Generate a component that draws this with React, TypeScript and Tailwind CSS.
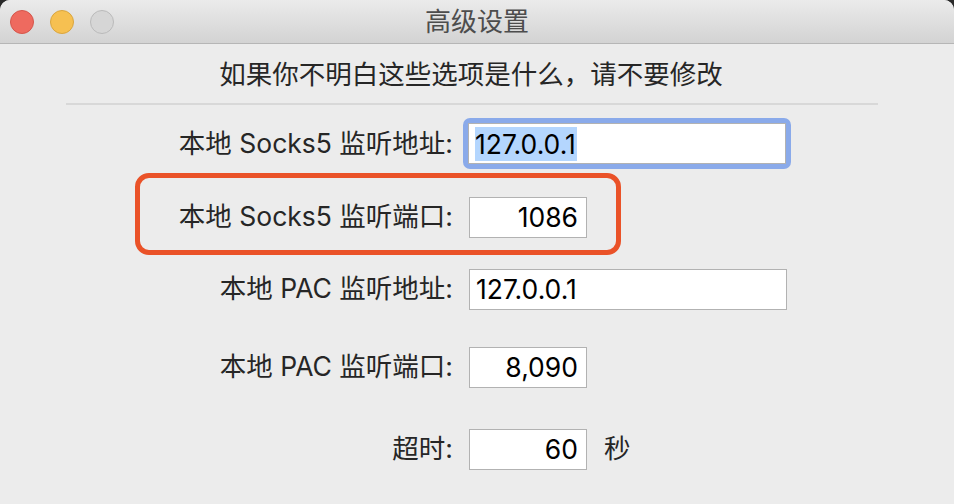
const FONT = "font-['Inter','Noto_Sans_CJK_SC',sans-serif]";

function TrafficLights() {
  return (
    <div className="absolute left-[10px] top-[10px] flex gap-4">
      <span className="h-6 w-6 rounded-full border border-[#d4564b] bg-[#ee6a5f]" />
      <span className="h-6 w-6 rounded-full border border-[#d9a53f] bg-[#f6c051]" />
      <span className="h-6 w-6 rounded-full border border-[#bababa] bg-[#d6d6d6]" />
    </div>
  );
}

function Field({
  value,
  wide,
  focused,
}: {
  value: string;
  wide?: boolean;
  focused?: boolean;
}) {
  const box = (
    <div
      className={`flex h-[41px] items-center border border-[#b2b2b2] bg-white text-[26.5px] text-black ${
        wide ? "w-[318px] justify-start pl-[6px]" : "w-[118px] justify-end pr-[8px]"
      } ${focused ? "border-[#9ab4ec]" : ""}`}
    >
      {focused ? (
        <span className="inline-block bg-[#b4d6fe] pr-[1px] leading-[34px]">{value}</span>
      ) : (
        <span className="leading-[34px]">{value}</span>
      )}
    </div>
  );
  if (!focused) return box;
  return <div className="-m-[6px] rounded-[7px] bg-[#8aaaea] p-[5px]">{box}</div>;
}

function Row({
  label,
  value,
  wide,
  focused,
  suffix,
  className,
}: {
  label: string;
  value: string;
  wide?: boolean;
  focused?: boolean;
  suffix?: string;
  className?: string;
}) {
  return (
    <div className={`flex items-center ${className ?? ""}`}>
      <div className="w-[453px] whitespace-nowrap text-right text-[26.5px] text-[#262626]">{label}</div>
      <div className="ml-4">
        <Field value={value} wide={wide} focused={focused} />
      </div>
      {suffix && <span className="ml-[17px] text-[26.5px] text-[#262626]">{suffix}</span>}
    </div>
  );
}

export default function App() {
  return (
    <div className={`h-[504px] w-[954px] overflow-hidden bg-[#2a2a2a] ${FONT}`}>
      <div className="relative h-full overflow-hidden rounded-t-[10px] bg-[#ececec]">
        <div className="relative flex h-[44px] items-center justify-center border-b border-[#b6b6b6] bg-gradient-to-b from-[#ebebeb] to-[#d3d3d3]">
          <TrafficLights />
          <span className="text-[26px] leading-none text-[#4d4d4d]">高级设置</span>
        </div>

        <div className="pr-[12px] pt-[15px] text-center text-[26.5px] leading-[30px] text-[#262626]">
          如果你不明白这些选项是什么，请不要修改
        </div>
        <div className="mx-[66px] mt-[14px] h-[2px] w-[812px] bg-[#d8d8d8]" />

        <Row className="mt-[19px]" label="本地 Socks5 监听地址:" value="127.0.0.1" wide focused />
        <Row className="mt-[33px]" label="本地 Socks5 监听端口:" value="1086" />
        <Row className="mt-[31px]" label="本地 PAC 监听地址:" value="127.0.0.1" wide />
        <Row className="mt-[37px]" label="本地 PAC 监听端口:" value="8,090" />
        <Row className="mt-[41px]" label="超时:" value="60" suffix="秒" />

        {/* annotation box */}
        <div className="pointer-events-none absolute left-[135px] top-[173px] h-[82px] w-[486px] rounded-[14px] border-[5px] border-[#ea5228]" />
      </div>
    </div>
  );
}
